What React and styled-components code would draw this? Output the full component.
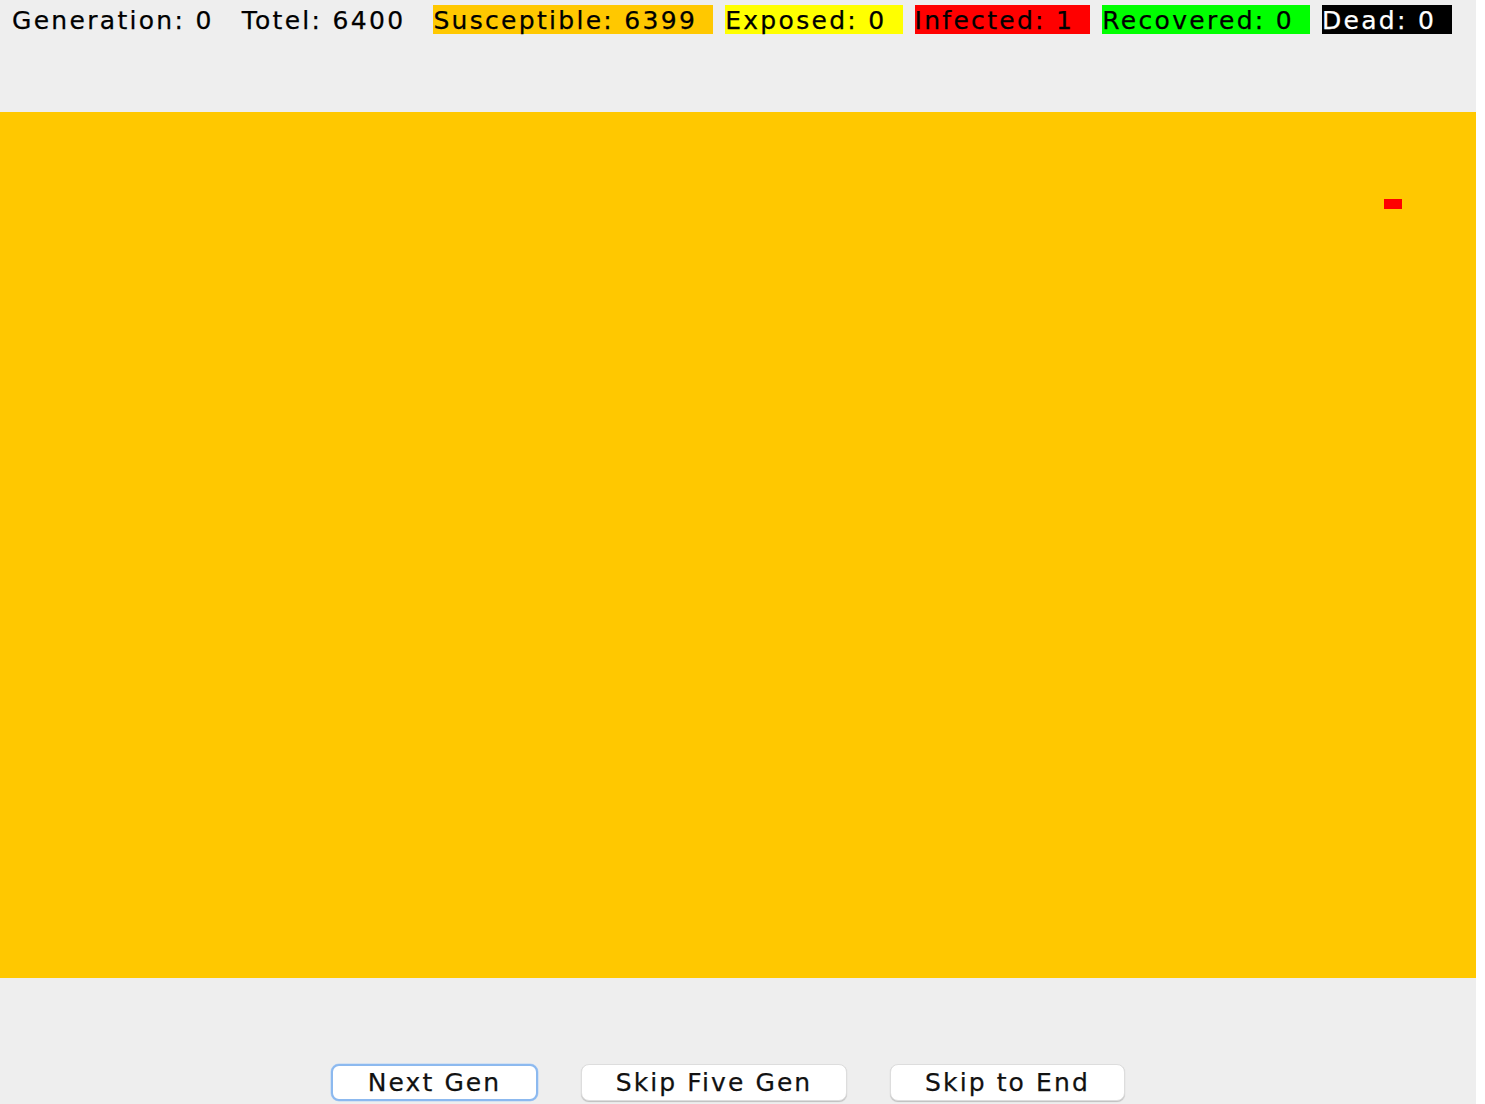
import styled, { createGlobalStyle } from 'styled-components';

const GRID = 80;
const INFECTED_CELL = { row: 8, col: 75 };

const stateColors = {
    susceptible: '#ffc800',
    exposed: '#ffff00',
    infected: '#ff0000',
    recovered: '#00ff00',
    dead: '#000000',
};

const GlobalStyle = createGlobalStyle`
    html, body {
        margin: 0;
        padding: 0;
        background: #ffffff;
    }
    body {
        font-family: "DejaVu Sans", "Liberation Sans", sans-serif;
    }
`;

const Frame = styled.div`
    width: 1476px;
    height: 1104px;
    background-color: #eeeeee;
    display: flex;
    flex-direction: column;
    overflow: hidden;
`;

const StatsBar = styled.div`
    height: 112px;
    box-sizing: border-box;
    padding: 5px 0 0 12px;
    display: flex;
    align-items: flex-start;
    gap: 12px;
`;

const Stat = styled.div`
    height: 29px;
    box-sizing: border-box;
    padding: 2px 16px 0 0;
    line-height: 27px;
    font-size: 25px;
    letter-spacing: 2.3px;
    white-space: nowrap;
    -webkit-text-stroke: 0.25px currentColor;
    color: ${(p) => (p.$state === 'dead' ? '#ffffff' : '#000000')};
    background-color: ${(p) => (p.$state ? stateColors[p.$state] : 'transparent')};
`;

const Board = styled.div`
    height: 866px;
    display: grid;
    grid-template-columns: repeat(${GRID}, 1fr);
    grid-template-rows: repeat(${GRID}, 1fr);
    background-color: ${stateColors.susceptible};
`;

const Cell = styled.div`
    background-color: ${(p) => stateColors[p.$state]};
`;

const Controls = styled.div`
    flex: 1;
    display: flex;
    align-items: flex-start;
    padding: 86px 0 0 331px;
    gap: 43px;
`;

const Button = styled.button`
    height: 37px;
    box-sizing: border-box;
    padding: 0;
    width: ${(p) => p.$width}px;
    border-radius: 8px;
    background: #ffffff;
    font-family: "DejaVu Sans", "Liberation Sans", sans-serif;
    font-size: 25px;
    letter-spacing: 2.1px;
    -webkit-text-stroke: 0.25px currentColor;
    color: #111111;
    line-height: 33px;
    border: ${(p) => (p.$focused ? '2px solid #8cb9ef' : '1px solid #dddddd')};
    box-shadow: ${(p) => (p.$focused ? '0 0 0 0.5px #b7d3f5' : '0 1px 1px rgba(0,0,0,0.2)')};
    cursor: pointer;
`;

const cells = Array.from({ length: GRID * GRID }, (_, i) => {
    const row = Math.floor(i / GRID);
    const col = i % GRID;
    const infected = row === INFECTED_CELL.row && col === INFECTED_CELL.col;
    return infected ? 'infected' : 'susceptible';
});

const count = (state) => cells.filter((c) => c === state).length;

const App = () => {
    return (
        <>
            <GlobalStyle/>
            <Frame>
                <StatsBar>
                    <Stat>Generation: 0</Stat>
                    <Stat>Totel: {cells.length}</Stat>
                    <Stat $state="susceptible">Susceptible: {count('susceptible')}</Stat>
                    <Stat $state="exposed">Exposed: {count('exposed')}</Stat>
                    <Stat $state="infected">Infected: {count('infected')}</Stat>
                    <Stat $state="recovered">Recovered: {count('recovered')}</Stat>
                    <Stat $state="dead">Dead: {count('dead')}</Stat>
                </StatsBar>
                <Board>
                    {cells.map((state, i) => (
                        <Cell key={i} $state={state}/>
                    ))}
                </Board>
                <Controls>
                    <Button $width={207} $focused>Next Gen</Button>
                    <Button $width={266}>Skip Five Gen</Button>
                    <Button $width={235}>Skip to End</Button>
                </Controls>
            </Frame>
        </>
    );
};

export default App;
